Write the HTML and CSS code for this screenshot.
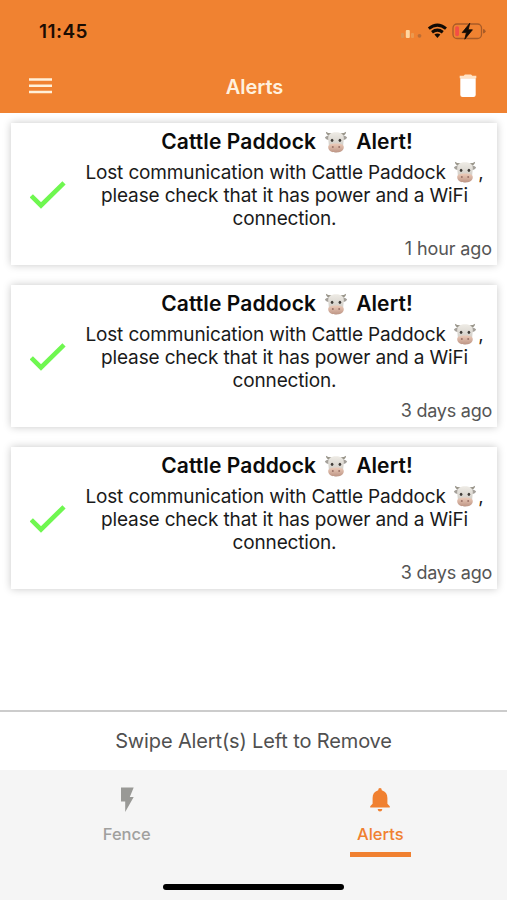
FILE: index.html
```html
<!DOCTYPE html>
<html lang="en">
<head>
<meta charset="utf-8">
<title>Alerts</title>
<link rel="stylesheet" href="styles.css">
</head>
<body>
<svg class="defs" aria-hidden="true">
  <defs>
    <linearGradient id="face" x1="0" y1="0" x2="0" y2="1"><stop offset="0" stop-color="#eeebe5"/><stop offset="1" stop-color="#c5c0b9"/></linearGradient>
    <linearGradient id="muzzle" x1="0" y1="0" x2="0" y2="1"><stop offset="0" stop-color="#eccbb9"/><stop offset="1" stop-color="#bd9585"/></linearGradient>
    <symbol id="cow" viewBox="0 0 24 24">
      <path d="M5.2 5.8Q2.1 4.8 1.9 1.7Q4 3.3 8 3.2ZM18.8 5.8Q21.9 4.8 22.1 1.7Q20 3.3 16 3.2Z" fill="#99958a"/>
      <path d="M6 5.6Q3 5.2.9 7.3Q2 10.6 6 10ZM18 5.6Q21 5.2 23.1 7.3Q22 10.6 18 10Z" fill="#a5a19b"/>
      <path d="M12 2.3C6.5 2.3 3.9 4.6 4.2 9L5 17C5.6 21 8.2 22.3 12 22.3S18.4 21 19 17L19.8 9C20.1 4.6 17.5 2.3 12 2.3Z" fill="url(#face)"/>
      <path d="M12 13.6C7.4 13.6 4.1 14.4 4.2 17.3C4.3 20.8 7.7 22.5 12 22.5S19.7 20.8 19.8 17.3C19.9 14.4 16.6 13.6 12 13.6Z" fill="url(#muzzle)"/>
      <ellipse cx="8.1" cy="10.3" rx="1.3" ry="1.6" fill="#413d39"/><ellipse cx="15.9" cy="10.3" rx="1.3" ry="1.6" fill="#413d39"/>
      <ellipse cx="8.8" cy="17" rx="1" ry="1.1" fill="#9c7368"/><ellipse cx="15.2" cy="17" rx="1" ry="1.1" fill="#9c7368"/>
    </symbol>
    <symbol id="check" viewBox="0 0 36 28"><path d="M1.3 14.8L11 24.5L34 1.8" fill="none" stroke="#6ff750" stroke-width="4.6"/></symbol>
  </defs>
</svg>
<div class="screen">
  <header class="header">
    <div class="status">
      <span class="time">11:45</span>
      <svg class="status-icons" viewBox="0 0 88 24">
        <rect x="2" y="13" width="3" height="5" rx="1" fill="#d9924f"/>
        <rect x="6.8" y="10" width="4" height="8" rx="1" fill="#ffd6a0"/>
        <rect x="12" y="13" width="3" height="5" rx="1" fill="#eb994f"/>
        <circle cx="20.5" cy="15.8" r="1.9" fill="#bc6d35"/>
        <g fill="none" stroke="#120b05" stroke-width="3"><path d="M29.8 8.6Q38.4 1.6 47 8.6"/><path d="M33 12.2Q38.4 8 43.8 12.2"/></g>
        <path d="M35.4 14.6Q38.4 12.6 41.4 14.6L38.4 18Z" fill="#120b05"/>
        <rect x="54" y="4" width="28.5" height="14.5" rx="4" fill="none" stroke="#a85b27" stroke-width="1.3"/>
        <rect x="56.2" y="6.2" width="3.8" height="10" rx="1.6" fill="#f34f45"/>
        <path d="M84 9Q86.6 9.2 86.6 11.2T84 13.6Z" fill="#a85b27"/>
        <path d="M70.8 3.2L63.2 12.6H67.4L65.8 19.2L73.4 9.8H69.2Z" fill="#120b05" stroke="#120b05" stroke-width=".8" stroke-linejoin="round"/>
      </svg>
    </div>
    <div class="nav">
      <svg class="menu" viewBox="0 0 23 16"><path d="M0 1.5H23M0 7.8H23M0 14H23" stroke="#fff1da" stroke-width="2.6"/></svg>
      <h1 class="title">Alerts</h1>
      <svg class="trash" viewBox="0 0 18 24"><path d="M.7 1.7H4.7L5.9.6H12.1L13.3 1.7H17.3V4.2H.7Z" fill="#ffe3c6"/><path d="M1.3 4.2H16.7V21Q16.7 23 14.5 23H3.5Q1.3 23 1.3 21Z" fill="#fff"/></svg>
    </div>
  </header>
  <main class="list">
    <article class="card">
      <svg class="check"><use href="#check"/></svg>
      <div class="content">
        <h2 class="card-title"><span>Cattle Paddock</span><svg class="cow"><use href="#cow"/></svg><span>Alert!</span></h2>
        <p class="message"><span class="line">Lost communication with Cattle Paddock<svg class="cow"><use href="#cow"/></svg>,</span><span class="line">please check that it has power and a WiFi</span><span class="line">connection.</span></p>
        <time class="ago">1 hour ago</time>
      </div>
    </article>
    <article class="card">
      <svg class="check"><use href="#check"/></svg>
      <div class="content">
        <h2 class="card-title"><span>Cattle Paddock</span><svg class="cow"><use href="#cow"/></svg><span>Alert!</span></h2>
        <p class="message"><span class="line">Lost communication with Cattle Paddock<svg class="cow"><use href="#cow"/></svg>,</span><span class="line">please check that it has power and a WiFi</span><span class="line">connection.</span></p>
        <time class="ago days">3 days ago</time>
      </div>
    </article>
    <article class="card">
      <svg class="check"><use href="#check"/></svg>
      <div class="content">
        <h2 class="card-title"><span>Cattle Paddock</span><svg class="cow"><use href="#cow"/></svg><span>Alert!</span></h2>
        <p class="message"><span class="line">Lost communication with Cattle Paddock<svg class="cow"><use href="#cow"/></svg>,</span><span class="line">please check that it has power and a WiFi</span><span class="line">connection.</span></p>
        <time class="ago days">3 days ago</time>
      </div>
    </article>
  </main>
  <div class="hint">Swipe Alert(s) Left to Remove</div>
  <footer class="footer">
    <nav class="tabs">
      <a class="tab"><svg class="tab-icon" viewBox="0 0 24 28"><path d="M6 1.5H18.7L14.8 11H18.7L10.2 26V15.5H6Z" fill="#999996"/></svg><span>Fence</span></a>
      <a class="tab active"><svg class="tab-icon" viewBox="0 0 24 28"><path d="M12 2Q13.8 2 13.8 4.3C17.6 5.4 19.4 8.2 19.4 12V17.8L21.8 20.2V21.5H2.2V20.2L4.6 17.8V12C4.6 8.2 6.4 5.4 10.2 4.3Q10.2 2 12 2ZM9.6 23H14.4Q14 25.6 12 25.6T9.6 23Z" fill="#f08030"/></svg><span>Alerts</span></a>
    </nav>
    <div class="home"></div>
  </footer>
</div>
</body>
</html>
```
FILE: styles.css
```css
* { box-sizing: border-box; }
body { margin: 0; background: #fff; font-family: Inter, "Liberation Sans", sans-serif; }
h1, h2, p { margin: 0; }
svg { display: block; flex: none; }
.defs { position: absolute; width: 0; height: 0; }
.screen { width: 507px; height: 900px; display: flex; flex-direction: column; overflow: hidden; }
.header { height: 113px; flex: none; background: #f08231; }
.status { height: 60px; padding: 20px 20px 0 39px; display: flex; justify-content: space-between; }
.time { font-size: 19px; line-height: 24px; font-weight: 600; color: #1b0d03; letter-spacing: .45px; }
.status-icons { width: 88px; height: 24px; }
.nav { height: 53px; padding: 0 30px 0 29px; display: grid; grid-template-columns: 23px 1fr 18px; align-items: center; }
.menu { width: 23px; height: 16px; margin-top: -1px; }
.title { font-size: 20px; line-height: 24px; font-weight: 600; color: #fff1df; text-align: center; letter-spacing: -.05px; padding-right: 2px; }
.trash { width: 18px; height: 24px; margin-top: -2px; }
.list { height: 597px; flex: none; padding: 10px 10px 0 11px; display: flex; flex-direction: column; gap: 20px; background: #fff; }
.card { height: 142px; flex: none; background: #fff; box-shadow: 0 0 8px rgba(0, 0, 0, .22); display: flex; }
.check { width: 36px; height: 28px; margin: 58px 0 0 19px; }
.content { flex: 1; display: flex; flex-direction: column; padding: 7px 5px 0 12px; }
.card-title { height: 24px; display: flex; justify-content: center; font-size: 21px; line-height: 24px; font-weight: 600; color: #0b0b0b; letter-spacing: .1px; white-space: nowrap; padding-left: 4px; }
.cow { width: 24px; height: 24px; }
.card-title .cow { margin: 0 8px; }
.message { margin-top: 7px; font-size: 19px; line-height: 23.2px; color: #1a1a1a; }
.line { display: flex; justify-content: center; height: 23.2px; white-space: nowrap; letter-spacing: -.15px; padding-right: 1px; }
.message .cow { margin: -1px 1.5px 0 7px; }
.ago { align-self: flex-end; margin-top: 6px; font-size: 18px; line-height: 24px; color: #555; letter-spacing: -.1px; white-space: nowrap; }
.days { letter-spacing: -.25px; }
.hint { height: 60px; flex: none; border-top: 2px solid #ccc; background: #fff; text-align: center; font-size: 20px; line-height: 58px; color: #505050; letter-spacing: -.14px; }
.footer { flex: 1; background: #f5f5f5; display: flex; flex-direction: column; align-items: center; }
.tabs { width: 100%; height: 87px; display: grid; grid-template-columns: 1fr 1fr; justify-items: center; }
.tab { width: 61px; height: 87px; padding-top: 16px; display: flex; flex-direction: column; align-items: center; color: #a0a09e; font-size: 16.5px; line-height: 24px; font-weight: 550; }
.tab span { margin-top: 8px; }
.tab-icon { width: 24px; height: 28px; }
.tab.active { color: #f08030; border-bottom: 5px solid #f08030; }
.home { width: 181px; height: 6px; margin-top: 27px; border-radius: 3px; background: #000; }
```
